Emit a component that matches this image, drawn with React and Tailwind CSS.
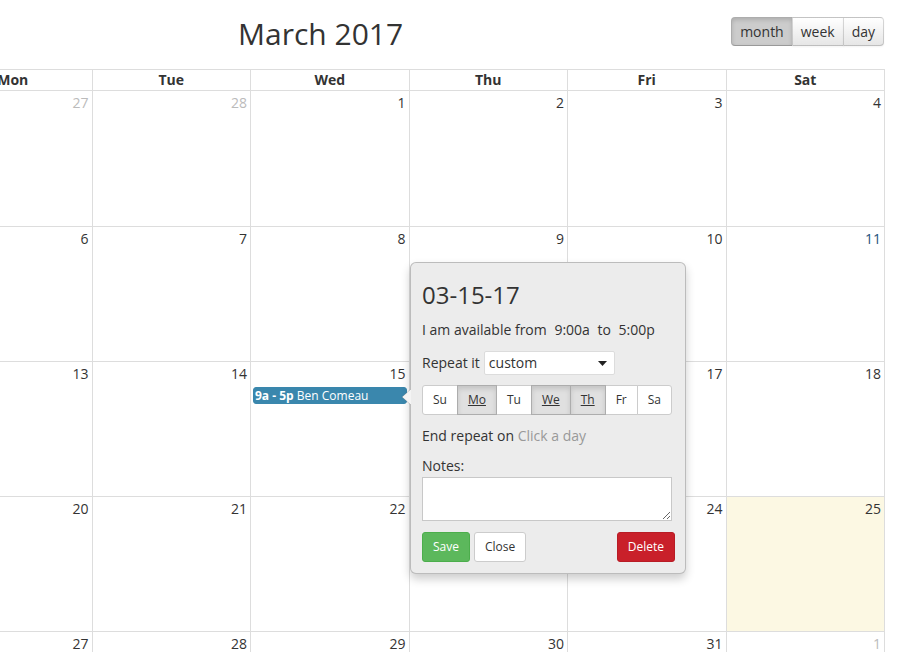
import React from "react";

const font = { fontFamily: '"Open Sans", "Liberation Sans", sans-serif' };

const weekdays = ["Mon", "Tue", "Wed", "Thu", "Fri", "Sat"];

// each row is one calendar week, Monday to Saturday
const weeks = [
  [
    { d: 27, other: true },
    { d: 28, other: true },
    { d: 1 },
    { d: 2 },
    { d: 3 },
    { d: 4 },
  ],
  [{ d: 6 }, { d: 7 }, { d: 8 }, { d: 9 }, { d: 10 }, { d: 11, link: true }],
  [
    { d: 13 },
    { d: 14 },
    { d: 15, event: true },
    { d: 16 },
    { d: 17 },
    { d: 18 },
  ],
  [{ d: 20 }, { d: 21 }, { d: 22 }, { d: 23 }, { d: 24 }, { d: 25, today: true }],
  [
    { d: 27 },
    { d: 28 },
    { d: 29 },
    { d: 30 },
    { d: 31 },
    { d: 1, other: true },
  ],
  [
    { d: 3, other: true },
    { d: 4, other: true },
    { d: 5, other: true },
    { d: 6, other: true },
    { d: 7, other: true },
    { d: 8, other: true },
  ],
];

const repeatDays = [
  { label: "Su" },
  { label: "Mo", on: true },
  { label: "Tu" },
  { label: "We", on: true },
  { label: "Th", on: true },
  { label: "Fr" },
  { label: "Sa" },
];

function ViewSwitcher() {
  const views = ["month", "week", "day"];
  return (
    <div className="absolute right-[18px] top-[17px] flex">
      {views.map((v, i) => {
        const active = v === "month";
        return (
          <button
            key={v}
            className={
              "h-[29px] border border-[rgba(0,0,0,0.15)] border-b-[rgba(0,0,0,0.25)] px-[8px] text-[14px] leading-none text-[#333] " +
              (i > 0 ? "-ml-px " : "") +
              (i === 0 ? "rounded-l-[4px] " : "") +
              (i === views.length - 1 ? "rounded-r-[4px] " : "") +
              (active
                ? "bg-[#cccccc] shadow-[inset_0_2px_4px_rgba(0,0,0,0.15)]"
                : "bg-gradient-to-b from-[#ffffff] to-[#e6e6e6] shadow-[0_1px_2px_rgba(0,0,0,0.05)]")
            }
          >
            {v}
          </button>
        );
      })}
    </div>
  );
}

function DayCell({ day }) {
  let numColor = "text-[#333]";
  if (day.other) numColor = "text-[#bbbbbb]";
  if (day.link) numColor = "text-[#23527c]";
  return (
    <div
      className={
        "border-r border-[#dddddd] " + (day.today ? "bg-[#fcf8e3]" : "bg-white")
      }
    >
      <div className={"pr-[3px] pt-[2px] text-right text-[14px] leading-[20px] " + numColor}>
        {day.d}
      </div>
      {day.event && (
        <div className="mx-[2px] mt-[3px] h-[17px] truncate rounded-[3px] border border-[#3a87ad] bg-[#3a87ad] pl-[1px] text-[12px] leading-[15px] text-white">
          <span className="font-bold">9a - 5p</span> Ben Comeau
        </div>
      )}
    </div>
  );
}

function EditPopover() {
  return (
    <div className="absolute left-[410px] top-[262px] w-[276px] rounded-[6px] border border-[rgba(0,0,0,0.2)] bg-[#ececec] pl-[11px] pr-[10px] pt-[19px] pb-[11px] text-[14px] leading-[20px] text-[#333] shadow-[0_5px_10px_rgba(0,0,0,0.2)]">
      <svg
        className="absolute -left-[10px] top-[126px]"
        width="10"
        height="16"
        viewBox="0 0 10 16"
      >
        <polygon points="10,0 1,8 10,16" fill="#f4f4f4" />
        <polyline
          points="10,0 1,8 10,16"
          fill="none"
          stroke="rgba(0,0,0,0.15)"
          strokeWidth="1"
        />
      </svg>

      <h3 className="text-[24px] leading-[26px] font-normal">03-15-17</h3>

      <p className="mt-[12px]">
        I am available from <span className="px-[4px]">9:00a</span> to{" "}
        <span className="px-[4px]">5:00p</span>
      </p>

      <div className="mt-[11px] flex items-center">
        <span>Repeat it</span>
        <div className="ml-[4px] flex h-[24px] w-[131px] items-center justify-between rounded-[2px] border border-[#dcdcdc] bg-white pl-[4px] pr-[7px]">
          <span>custom</span>
          <svg width="9" height="5" viewBox="0 0 9 5">
            <polygon points="0,0 9,0 4.5,5" fill="#222" />
          </svg>
        </div>
      </div>

      <div className="mt-[10px] flex w-[250px]">
        {repeatDays.map((d, i) => (
          <button
            key={d.label}
            className={
              "h-[30px] flex-auto border text-[12px] leading-none " +
              (i > 0 ? "-ml-px " : "") +
              (i === 0 ? "rounded-l-[3px] " : "") +
              (i === repeatDays.length - 1 ? "rounded-r-[3px] " : "") +
              (d.on
                ? "relative z-10 border-[#adadad] bg-[#e0e0e0] text-[#333] underline shadow-[inset_0_3px_5px_rgba(0,0,0,0.125)]"
                : "border-[#cccccc] bg-white text-[#333]")
            }
          >
            {d.label}
          </button>
        ))}
      </div>

      <p className="mt-[11px]">
        End repeat on <span className="text-[#999]">Click a day</span>
      </p>

      <p className="mt-[10px]">Notes:</p>
      <textarea className="mt-[1px] block h-[44px] w-[250px] border border-[#c8c8c8] bg-white" />

      <div className="mt-[11px] flex items-center">
        <button className="h-[30px] rounded-[3px] border border-[#4cae4c] bg-[#5cb85c] px-[10px] text-[12px] text-white">
          Save
        </button>
        <button className="ml-[4px] h-[30px] rounded-[3px] border border-[#cccccc] bg-white px-[10px] text-[12px] text-[#333]">
          Close
        </button>
        <button className="ml-auto h-[30px] rounded-[3px] border border-[#b81c25] bg-[#c9202a] px-[10px] text-[12px] text-white">
          Delete
        </button>
      </div>
    </div>
  );
}

export default function App() {
  return (
    <div className="relative h-[652px] w-[902px] overflow-hidden bg-white text-[#333]" style={font}>
      <div className="relative h-[69px]">
        <h2 className="absolute left-[238px] top-[17px] text-[30px] leading-[34px] font-normal text-[#333]">
          March 2017
        </h2>
        <ViewSwitcher />
      </div>

      <div className="-ml-[66px] w-[951px]">
        <div className="grid h-[22px] grid-cols-6 border-y border-[#dddddd]">
          {weekdays.map((w) => (
            <div
              key={w}
              className="border-r border-[#dddddd] text-center text-[14px] leading-[20px] font-bold"
            >
              {w}
            </div>
          ))}
        </div>
        {weeks.map((week, i) => (
          <div
            key={i}
            className={
              "grid grid-cols-6 border-b border-[#dddddd] " +
              (i === 0 ? "h-[136px]" : "h-[135px]")
            }
          >
            {week.map((day, j) => (
              <DayCell key={j} day={day} />
            ))}
          </div>
        ))}
      </div>

      <EditPopover />
    </div>
  );
}
